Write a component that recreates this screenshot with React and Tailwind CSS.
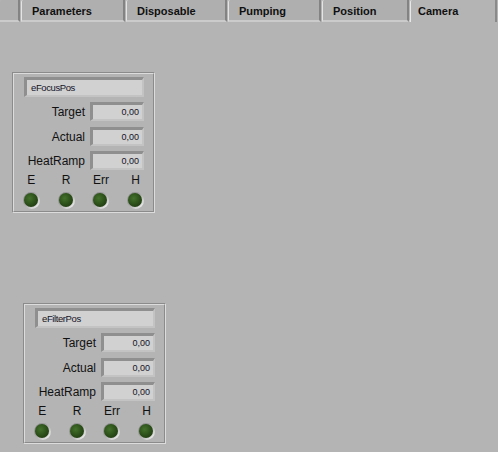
import React from "react";

const font = { fontFamily: '"Liberation Sans", Arial, sans-serif' };

const tabs = [
  { label: "", w: "w-[20px]", ml: "ml-0" },
  { label: "Parameters", w: "w-[104px]", ml: "ml-[1px]" },
  { label: "Disposable", w: "w-[101px]", ml: "ml-[1px]" },
  { label: "Pumping", w: "w-[93px]", ml: "ml-[1px]" },
  { label: "Position", w: "w-[87px]", ml: "ml-[1px]" },
];

const Sunken = ({ children, className }) => (
  <div
    className={
      "flex items-center bg-[#d1d1d1] border-t-[3px] border-l-[3px] border-b-[2px] border-r-[2px] border-t-[#8f8f8f] border-l-[#8f8f8f] border-b-[#c3c3c3] border-r-[#c3c3c3] " +
      className
    }
  >
    {children}
  </div>
);

const Led = () => (
  <div className="w-[17px] h-[17px] rounded-full bg-linear-to-br from-[#777777] via-[#b0b0b0] to-white pt-[1px] pl-[1px]">
    <div className="w-[14px] h-[14px] rounded-full bg-[radial-gradient(circle_at_40%_38%,#43722b_0%,#2a4c18_55%,#1a320d_100%)]" />
  </div>
);

const Row = ({ label, mt }) => (
  <div className={"flex items-center justify-end pr-[9px] h-[19px] " + mt}>
    <span className="pr-[5px] text-[12px] text-[#111111] leading-none">{label}</span>
    <Sunken className="w-[54px] h-[19px] justify-end pr-[3px]">
      <span className="text-[9px] text-[#141428] leading-none">0,00</span>
    </Sunken>
  </div>
);

const Cluster = ({ name, className }) => (
  <div
    className={
      "w-[143px] h-[141px] border border-t-[#8b8b8b] border-l-[#8b8b8b] border-b-[#dcdcdc] border-r-[#dcdcdc] " +
      className
    }
  >
    <div className="h-full flex flex-col border border-t-[#dcdcdc] border-l-[#dcdcdc] border-b-[#8b8b8b] border-r-[#8b8b8b]">
      <Sunken className="ml-[10px] mt-[3px] w-[120px] h-[20px] pl-[4px]">
        <span className="text-[9.5px] tracking-[-0.4px] text-[#141428] leading-none">{name}</span>
      </Sunken>
      <Row label="Target" mt="mt-[5px]" />
      <Row label="Actual" mt="mt-[6px]" />
      <Row label="HeatRamp" mt="mt-[5px]" />
      <div className="flex mt-[3px] h-[14px]">
        {["E", "R", "Err", "H"].map((l) => (
          <div key={l} className="w-[35px] text-center text-[12px] leading-[14px] text-[#111111]">
            {l}
          </div>
        ))}
      </div>
      <div className="flex mt-[5px]">
        {[0, 1, 2, 3].map((i) => (
          <div key={i} className="w-[35px] flex justify-center">
            <Led />
          </div>
        ))}
      </div>
    </div>
  </div>
);

export default function App() {
  return (
    <div className="w-[498px] h-[452px] bg-[#b4b4b4] overflow-hidden" style={font}>
      {/* tab strip */}
      <div className="flex h-[22px]">
        {tabs.map((t, i) => (
          <div
            key={i}
            className={
              "h-[22px] flex items-center pl-[10px] pt-[2px] bg-[#afafaf] border-l border-r-2 border-b-2 border-l-[#e4e4e4] border-r-[#838383] border-b-[#cbcbcb] rounded-tl-[2px] text-[11px] font-bold text-[#101010] whitespace-nowrap " +
              t.w +
              " " +
              t.ml +
              (i === 0 ? " border-l-0" : "")
            }
          >
            {t.label}
          </div>
        ))}
        <div className="h-[22px] w-[1px] border-b-2 border-b-[#cbcbcb]" />
        <div className="h-[22px] w-[87px] flex items-center pl-[7px] pt-[1px] bg-[#b4b4b4] border-l border-r-2 border-l-[#e8e8e8] border-r-[#8a8a8a] rounded-tl-[2px] text-[11px] font-bold text-[#101010]">
          Camera
        </div>
      </div>

      <Cluster name="eFocusPos" className="ml-[12px] mt-[50px]" />
      <Cluster name="eFilterPos" className="ml-[23px] mt-[90px]" />
    </div>
  );
}
